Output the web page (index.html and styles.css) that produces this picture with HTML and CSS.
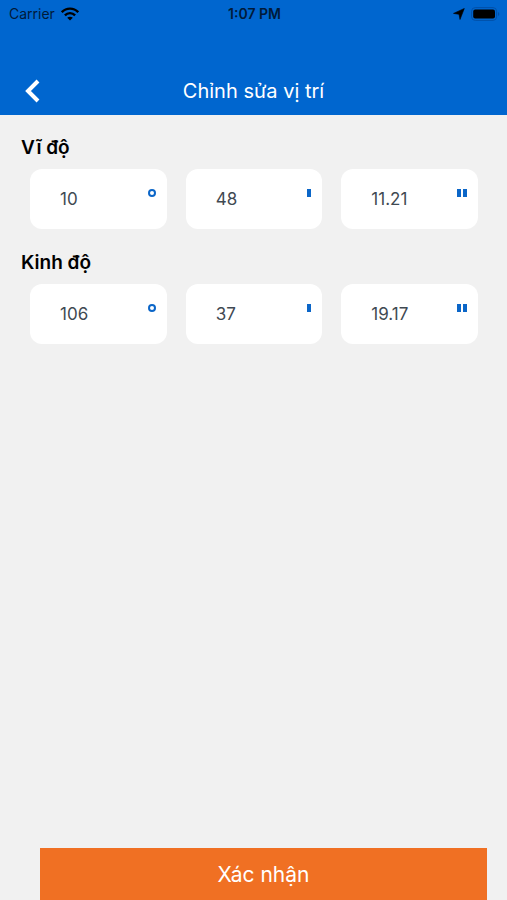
FILE: index.html
```html
<!DOCTYPE html>
<html lang="vi">
<head>
    <meta charset="UTF-8">
    <meta name="viewport" content="width=device-width, initial-scale=1.0">
    <title>Chỉnh sửa vị trí</title>
    <link rel="stylesheet" href="styles.css">
</head>
<body>
    <header class="header">
        <!-- Status bar -->
        <div class="status-bar">
            <div class="carrier">
                <span>Carrier</span>
                <svg width="18" height="14" viewBox="0 0 18 14" fill="none" stroke="#000" stroke-width="2.4" aria-hidden="true">
                    <path d="M0.8 5.2C5.3 0.4 12.7 0.4 17.2 5.2"/>
                    <path d="M3.9 8.3C6.7 5.4 11.3 5.4 14.1 8.3"/>
                    <path d="M9 13.6L6.2 10.8C7.8 9.3 10.2 9.3 11.8 10.8Z" fill="#000" stroke="none"/>
                </svg>
            </div>
            <span class="time">1:07 PM</span>
            <div class="indicators">
                <svg width="12" height="12" viewBox="0 0 12 12" aria-hidden="true">
                    <path d="M11.3 0.5L7 11.5L6 6.3L0.5 5.4Z" fill="#000" stroke="#000" stroke-width="0.6" stroke-linejoin="round"/>
                </svg>
                <svg width="29" height="14" viewBox="0 0 29 14" aria-hidden="true">
                    <rect x="0.6" y="0.6" width="25" height="12.8" rx="3.6" fill="none" stroke="#0050a8"/>
                    <rect x="2.2" y="2.4" width="21.8" height="9.2" rx="2" fill="#000"/>
                    <path d="M27 5C28.8 5.6 28.8 8.4 27 9Z" fill="#0050a8"/>
                </svg>
            </div>
        </div>

        <!-- Navigation -->
        <div class="nav">
            <button type="button" class="back" aria-label="Quay lại">
                <svg width="16" height="24" viewBox="0 0 16 24" fill="none" stroke="#fff" stroke-width="4" aria-hidden="true">
                    <path d="M14 2L4 12L14 22"/>
                </svg>
            </button>
            <h1>Chỉnh sửa vị trí</h1>
        </div>
    </header>

    <form class="form">
        <fieldset>
            <legend>Vĩ độ</legend>
            <div class="fields">
                <div class="field">
                    <input type="text" inputmode="numeric" aria-label="Vĩ độ, độ" value="10">
                    <span class="unit degree"></span>
                </div>
                <div class="field">
                    <input type="text" inputmode="numeric" aria-label="Vĩ độ, phút" value="48">
                    <span class="unit minute"></span>
                </div>
                <div class="field">
                    <input type="text" inputmode="decimal" aria-label="Vĩ độ, giây" value="11.21">
                    <span class="unit second"></span>
                </div>
            </div>
        </fieldset>

        <fieldset>
            <legend>Kinh độ</legend>
            <div class="fields">
                <div class="field">
                    <input type="text" inputmode="numeric" aria-label="Kinh độ, độ" value="106">
                    <span class="unit degree"></span>
                </div>
                <div class="field">
                    <input type="text" inputmode="numeric" aria-label="Kinh độ, phút" value="37">
                    <span class="unit minute"></span>
                </div>
                <div class="field">
                    <input type="text" inputmode="decimal" aria-label="Kinh độ, giây" value="19.17">
                    <span class="unit second"></span>
                </div>
            </div>
        </fieldset>

        <button type="submit" class="confirm">Xác nhận</button>
    </form>
</body>
</html>
```

FILE: styles.css
```css
* {
    box-sizing: border-box;
}

body {
    font-family: Inter, "Liberation Sans", sans-serif;
    background-color: #f1f1f1;
    margin: 0;
    min-height: 100vh;
    display: flex;
    flex-direction: column;
}

.header {
    background-color: #0066cf;
}

.status-bar {
    display: grid;
    grid-template-columns: 1fr auto 1fr;
    align-items: center;
    height: 27px;
    padding: 0 7px 0 9px;
    font-size: 14px;
    color: #001a3a;
}

.carrier, .indicators {
    display: flex;
    align-items: center;
    gap: 6px;
}

.indicators {
    justify-content: flex-end;
}

.time {
    font-weight: 600;
}

.nav {
    display: grid;
    grid-template-columns: 64px 1fr 64px;
    align-items: center;
    height: 48px;
    margin-top: 40px;
}

.back {
    display: flex;
    align-items: center;
    height: 48px;
    padding: 0 24px;
    background: none;
    border: none;
    cursor: pointer;
}

h1 {
    margin: 0;
    font-size: 20px;
    font-weight: 400;
    text-align: center;
    color: white;
}

.form {
    flex: 1;
    display: flex;
    flex-direction: column;
    padding-top: 20px;
}

fieldset {
    min-width: 0;
    margin: 0 0 21px;
    padding: 0;
    border: none;
}

legend {
    padding: 0 21px;
    font-size: 19px;
    font-weight: 600;
    line-height: 26px;
    color: #000;
}

.fields {
    display: grid;
    grid-template-columns: repeat(3, minmax(0, 1fr));
    gap: 19px;
    margin-top: 8px;
    padding: 0 29px 0 30px;
}

.field {
    display: flex;
    height: 60px;
    padding-right: 11px;
    background: white;
    border-radius: 12px;
}

.field input {
    flex: 1;
    min-width: 0;
    padding: 0 0 0 30px;
    background: none;
    border: none;
    outline: none;
    font-family: inherit;
    font-size: 17px;
    color: #3f4952;
}

.unit {
    height: 8px;
    margin-top: 20px;
}

.degree {
    width: 8px;
    border: 2px solid #0b66c8;
    border-radius: 50%;
}

.minute {
    width: 4px;
    background: #0b66c8;
}

.second {
    width: 10px;
    border: solid #0b66c8;
    border-width: 0 4px;
}

.confirm {
    height: 52px;
    margin: auto 20px 0 40px;
    background-color: #f07023;
    border: none;
    font-family: inherit;
    font-size: 21px;
    color: white;
    cursor: pointer;
}
```
